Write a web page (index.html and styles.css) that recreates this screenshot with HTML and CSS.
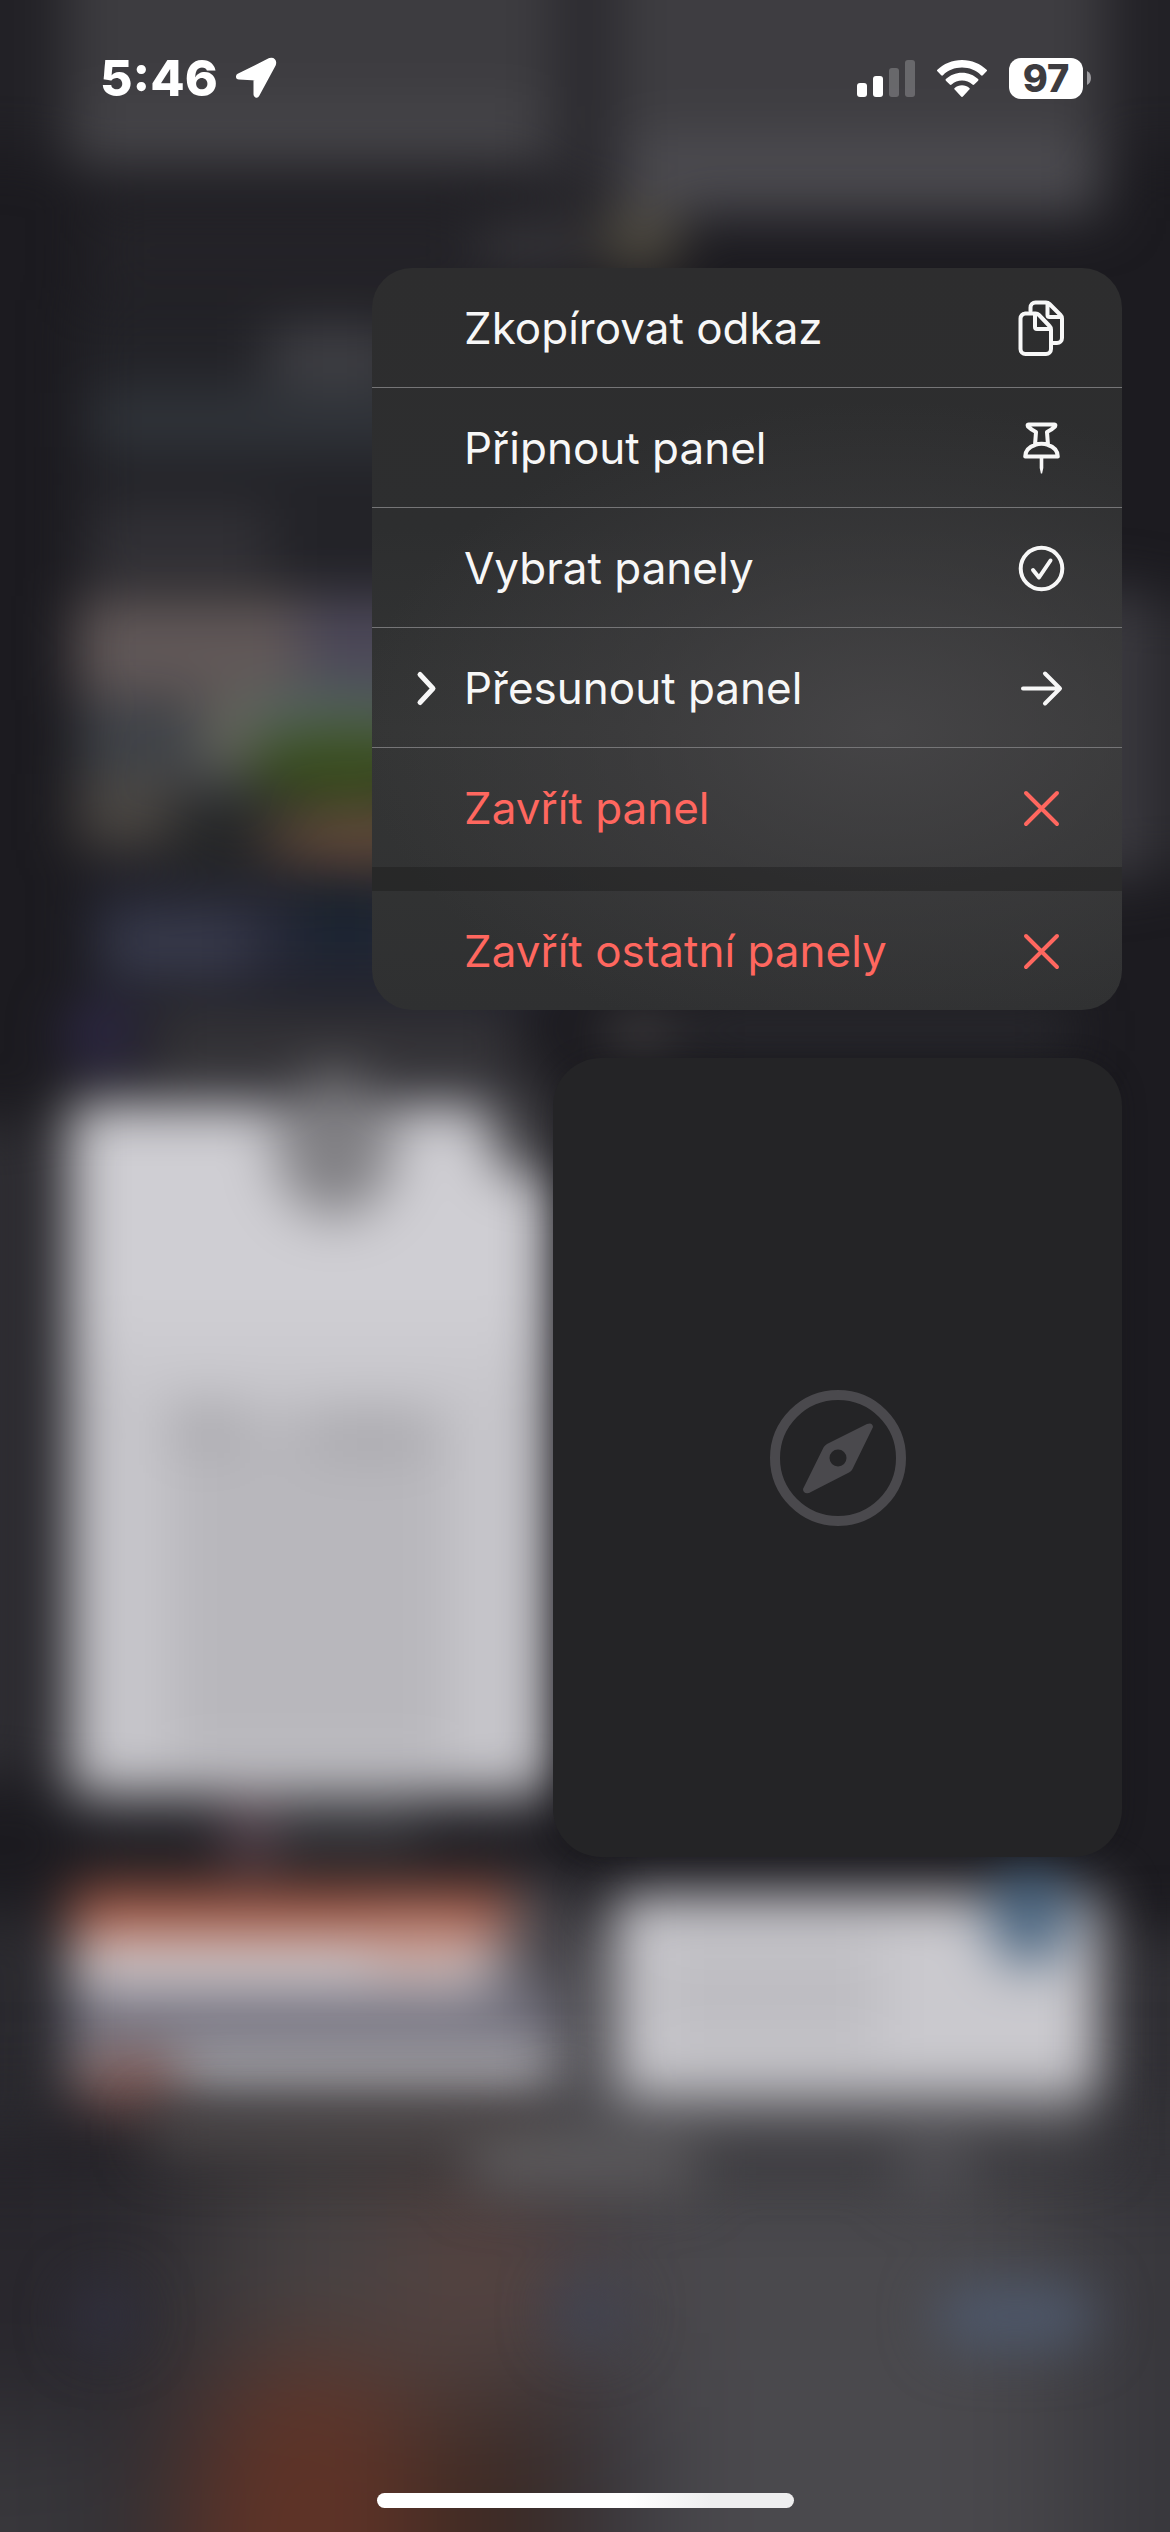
FILE: index.html
```html
<!DOCTYPE html>
<html lang="cs">
<head>
<meta charset="utf-8">
<meta name="viewport" content="width=device-width, initial-scale=1">
<title>Panely</title>
<link rel="stylesheet" href="styles.css">
</head>
<body>
<div class="screen">
  <!-- Blurred overview of the open tabs -->
  <svg class="backdrop" viewBox="0 0 1170 2532" preserveAspectRatio="none" aria-hidden="true">
    <defs>
      <filter id="soft" color-interpolation-filters="sRGB" filterUnits="userSpaceOnUse" x="-100" y="-100" width="1370" height="2732"><feGaussianBlur stdDeviation="27"/></filter>
      <filter id="wide" color-interpolation-filters="sRGB" filterUnits="userSpaceOnUse" x="-200" y="-200" width="1570" height="2932"><feGaussianBlur stdDeviation="56"/></filter>
      <linearGradient id="page" x1="0" y1="0" x2="0" y2="1"><stop offset="0" stop-color="#cfced3"/><stop offset=".3" stop-color="#cfced3"/><stop offset=".42" stop-color="#c7c6cb"/><stop offset="1" stop-color="#c7c6cb"/></linearGradient>
      <linearGradient id="bar" gradientUnits="userSpaceOnUse" x1="0" y1="0" x2="1170" y2="0"><stop offset="0" stop-color="#29272d"/><stop offset=".1" stop-color="#2a282e"/><stop offset=".24" stop-color="#464243"/><stop offset=".38" stop-color="#4c4342"/><stop offset=".5" stop-color="#454146"/><stop offset=".6" stop-color="#4a494d"/><stop offset=".85" stop-color="#4a494d"/><stop offset=".97" stop-color="#39383d"/><stop offset="1" stop-color="#37363b"/></linearGradient>
    </defs>
    <rect width="1170" height="2532" fill="#1c1b20"/>
    <g filter="url(#soft)">
      <!-- top row -->
      <rect x="-100" y="-100" width="1370" height="250" fill="#222126"/>
      <rect x="540" y="-100" width="90" height="300" fill="#2b2a2f"/>
      <rect x="66" y="-100" width="488" height="268" fill="#3d3c40"/>
      <rect x="80" y="105" width="460" height="54" fill="#47464a"/>
      <rect x="618" y="-100" width="488" height="316" fill="#3e3d41"/>
      <rect x="630" y="135" width="460" height="76" fill="#4c4b50"/>
      <rect x="90" y="200" width="390" height="90" fill="#242328"/>
      <rect x="480" y="222" width="110" height="46" fill="#3a393d"/>
      <ellipse cx="640" cy="240" rx="42" ry="30" fill="#544f42"/>
      <!-- left page -->
      <rect x="80" y="300" width="480" height="290" fill="#232328"/>
      <rect x="270" y="328" width="130" height="56" fill="#424247"/>
      <rect x="90" y="392" width="460" height="56" fill="#31353b"/>
      <rect x="90" y="510" width="180" height="66" fill="#333237"/>
      <rect x="76" y="596" width="250" height="104" fill="#615858"/>
      <rect x="300" y="596" width="250" height="110" fill="#4c4858"/>
      <rect x="80" y="704" width="190" height="90" fill="#3f4349"/>
      <rect x="76" y="774" width="120" height="76" fill="#4b4743"/>
      <rect x="200" y="700" width="60" height="70" fill="#65655c"/>
      <rect x="170" y="794" width="130" height="80" fill="#262728"/>
      <ellipse cx="340" cy="716" rx="100" ry="28" fill="#54665f"/>
      <ellipse cx="350" cy="766" rx="106" ry="38" fill="#3a4e1e"/>
      <ellipse cx="370" cy="838" rx="110" ry="26" fill="#6d513f"/>
      <rect x="90" y="885" width="460" height="105" fill="#272938"/>
      <rect x="110" y="916" width="140" height="60" fill="#393b4c"/>
      <rect x="300" y="880" width="90" height="80" fill="#1b2430"/>
      <ellipse cx="100" cy="1036" rx="36" ry="32" fill="#302a4a"/>
      <rect x="150" y="1012" width="370" height="66" fill="#37363a"/>
      <ellipse cx="640" cy="1034" rx="40" ry="22" fill="#434142"/>
      <rect x="690" y="1008" width="380" height="46" fill="#2a2a2f"/>
      <!-- side strips -->
      <rect x="1090" y="590" width="46" height="290" fill="#444349"/>
      <rect x="1136" y="600" width="134" height="270" fill="#2a292e"/>
      <rect x="-100" y="1120" width="136" height="660" fill="#2f2e33"/>
      <rect x="-100" y="1910" width="150" height="250" fill="#2b2a2f"/>
      <rect x="1110" y="1930" width="160" height="250" fill="#302f34"/>
      <rect x="540" y="1930" width="80" height="230" fill="#4c4b50"/>
      <!-- light page -->
      <rect x="68" y="1102" width="484" height="694" rx="10" fill="url(#page)"/>
      <rect x="170" y="1410" width="280" height="350" fill="#b8b7bc"/>
      <rect x="170" y="1404" width="70" height="44" fill="#a9a8ad"/>
      <rect x="310" y="1410" width="120" height="44" fill="#a9a8ad"/>
      <ellipse cx="335" cy="1146" rx="60" ry="70" fill="#818084"/>
      <ellipse cx="534" cy="1128" rx="44" ry="48" fill="#38373b"/>
      <rect x="80" y="1822" width="450" height="34" fill="#262429"/>
      <rect x="270" y="1808" width="150" height="40" fill="#3c3c40"/>
      <ellipse cx="250" cy="1836" rx="28" ry="34" fill="#59454f"/>
      <!-- bottom row -->
      <rect x="70" y="1890" width="480" height="222" fill="#78767e"/>
      <rect x="70" y="1888" width="440" height="50" fill="#a85a45"/>
      <rect x="70" y="1938" width="420" height="54" fill="#d2cccf"/>
      <rect x="370" y="1924" width="100" height="40" fill="#c4998f"/>
      <rect x="520" y="1880" width="60" height="100" fill="#454348"/>
      <rect x="66" y="1996" width="490" height="42" fill="#6b6978"/>
      <rect x="70" y="2042" width="486" height="60" fill="#a9a8ad"/>
      <ellipse cx="130" cy="2088" rx="54" ry="36" fill="#835b57"/>
    </g>
    <g filter="url(#wide)">
      <rect x="-200" y="2136" width="1570" height="650" fill="url(#bar)"/>
      <rect x="420" y="2190" width="130" height="160" fill="#56423f"/>
      <ellipse cx="310" cy="2540" rx="130" ry="190" fill="#5e3327"/>
      <rect x="420" y="2400" width="140" height="320" fill="#3d2a24"/>
      <rect x="560" y="2370" width="80" height="350" fill="#35343a"/>
      <rect x="-200" y="2420" width="310" height="320" fill="#38373b"/>
    </g>
    <g filter="url(#soft)">
      <rect x="612" y="1894" width="490" height="204" rx="8" fill="#cac9ce"/>
      <rect x="660" y="1940" width="220" height="110" fill="#bebdc2"/>
      <ellipse cx="1030" cy="1914" rx="42" ry="52" fill="#496580"/>
      <rect x="540" y="2100" width="560" height="56" fill="#4c4b4f"/>
      <rect x="150" y="2112" width="400" height="40" fill="#504b4b"/>
      <rect x="470" y="2144" width="226" height="46" fill="#605e60"/>
      <rect x="900" y="2144" width="70" height="46" fill="#545358"/>
      <ellipse cx="104" cy="2316" rx="32" ry="34" fill="#31303f"/>
      <ellipse cx="590" cy="2312" rx="36" ry="36" fill="#414452"/>
      <rect x="936" y="2284" width="158" height="64" rx="30" fill="#4e586b"/>
    </g>
  </svg>

  <header class="status">
    <div class="status-left">
      <time class="clock">5:46</time>
      <svg class="location" viewBox="0 0 44 42" aria-hidden="true"><path d="M5 19.500 36 4 Q40 3 39 7 L22.500 37.500 V20.500 Z" fill="#fff" stroke="#fff" stroke-width="6" stroke-linejoin="round"/></svg>
    </div>
    <div class="status-right">
      <svg class="signal" viewBox="0 0 58 37" aria-hidden="true"><g fill="#fff"><rect y="23" width="10" height="14" rx="3"/><rect x="16" y="16" width="10" height="21" rx="3"/><g opacity=".22"><rect x="32" y="8" width="10" height="29" rx="3"/><rect x="48" width="10" height="37" rx="3"/></g></g></svg>
      <svg class="wifi" viewBox="0 0 50 37" aria-hidden="true"><g fill="#fff"><path d="M25 0C34.800 0 43.500 3.800 49.600 9.800a1 1 0 0 1 0 1.500L45.800 15.200a1.300 1.300 0 0 1-1.800 0C39 10.300 32.300 7.600 25 7.600S11 10.300 6 15.200a1.300 1.300 0 0 1-1.800 0L.4 11.300a1 1 0 0 1 0-1.500C6.500 3.800 15.200 0 25 0Z"/><path d="M25 12.800c6.200 0 11.900 2.400 16.100 6.300a1.100 1.100 0 0 1 0 1.600l-3.900 3.900a1.300 1.300 0 0 1-1.800 0A15.400 15.400 0 0 0 25 20.600c-4 0-7.600 1.500-10.400 4a1.300 1.300 0 0 1-1.800 0l-3.900-3.900a1.100 1.100 0 0 1 0-1.600C13.100 15.200 18.800 12.800 25 12.800Z"/><path d="M25 25.300c2.800 0 5.300 1 7.300 2.600a1.100 1.100 0 0 1 0 1.700l-6.400 6.900a1.200 1.200 0 0 1-1.800 0l-6.400-6.900a1.100 1.100 0 0 1 0-1.700c2-1.600 4.500-2.600 7.300-2.600Z"/></g></svg>
      <div class="battery"><span class="level">97</span><svg class="nub" viewBox="0 0 4 14" aria-hidden="true"><path d="M0 0Q4 2 4 7T0 14Z" fill="#9d9ca0"/></svg></div>
    </div>
  </header>

  <main class="content">
    <div class="menu" role="menu">
      <button class="item" role="menuitem"><span class="lead"></span><span class="label">Zkopírovat odkaz</span>
        <svg class="icon" viewBox="0 0 56 56"><path d="M16.500 11V7.500a5 5 0 0 1 5-5H32a5 5 0 0 1 3.500 1.500L46.500 15a5 5 0 0 1 1.500 3.500V38a5 5 0 0 1-5 5H38M33.500 3.500V15a2 2 0 0 0 2 2H47"/><path d="M11 13.500h10.500a5 5 0 0 1 3.500 1.500L35.500 26a5 5 0 0 1 1.500 3.500V49a5 5 0 0 1-5 5H11.500a5 5 0 0 1-5-5V18.500a5 5 0 0 1 5-5ZM21 14.500V27a2 2 0 0 0 2 2h13"/></svg></button>
      <button class="item" role="menuitem"><span class="lead"></span><span class="label">Připnout panel</span>
        <svg class="icon" viewBox="0 0 56 56"><path d="M14.500 4.500H40.500Q42 4.500 41 6.500 38 9.500 33 12L34 25Q43.500 28 43.800 36.500H11.200Q11.500 28 21 25L22 12Q17 9.500 14 6.500 13 4.500 14.500 4.500ZM21 25Q27.500 22.500 34 25"/><path class="solid" d="M25.700 37h3.600v11l-1.200 5.500h-1.200L25.700 48Z"/></svg></button>
      <button class="item" role="menuitem"><span class="lead"></span><span class="label">Vybrat panely</span>
        <svg class="icon" viewBox="0 0 56 56"><circle cx="27.500" cy="28.500" r="20.800"/><path d="M19 30 25 37.500 36.500 20.500"/></svg></button>
      <button class="item" role="menuitem" aria-haspopup="menu"><span class="lead"><svg class="chevron" viewBox="0 0 32 56"><path d="M8 14.500 21 28.500 8 42.500"/></svg></span><span class="label">Přesunout panel</span>
        <svg class="icon" viewBox="0 0 56 56"><path d="M9 28.500H45.500M31 13.500 46 28.500 31 43.500"/></svg></button>
      <button class="item danger last" role="menuitem"><span class="lead"></span><span class="label">Zavřít panel</span>
        <svg class="icon" viewBox="0 0 56 56"><path d="M12 13 43 44M43 13 12 44"/></svg></button>
      <div class="divider" role="separator"></div>
      <button class="item danger last" role="menuitem"><span class="lead"></span><span class="label">Zavřít ostatní panely</span>
        <svg class="icon" viewBox="0 0 56 56"><path d="M12 13 43 44M43 13 12 44"/></svg></button>
    </div>

    <section class="preview" aria-label="Prázdný panel">
      <svg class="compass" viewBox="0 0 136 136" aria-hidden="true"><circle cx="68" cy="68" r="63" fill="none" stroke="#4a494d" stroke-width="10"/><path fill="#4a494d" fill-rule="evenodd" d="M97 34Q102.500 32 103 37L82.500 79Q81.500 81 79 82.500L39 103Q33 104 33 99L53.500 57.500Q54.500 55.500 57 54ZM68 59.500a8.500 8.500 0 1 0 0 17 8.500 8.500 0 0 0 0-17Z"/></svg>
    </section>
  </main>

  <div class="home"></div>
</div>
</body>
</html>
```
FILE: styles.css
```css
* { box-sizing: border-box; }
body {
  margin: 0;
  background: #1c1b20;
  font-family: Inter, "Liberation Sans", sans-serif;
  color: #fff;
}
.screen {
  position: relative;
  min-height: 100vh;
  display: flex;
  flex-direction: column;
  overflow: hidden;
}
.backdrop {
  position: absolute;
  inset: 0;
  width: 100%;
  height: 100%;
  z-index: -1;
}
svg { display: block; }

.status {
  height: 156px;
  padding: 0 79px 0 100px;
  display: flex;
  align-items: center;
  justify-content: space-between;
}
.status-left, .status-right { display: flex; align-items: center; }
.status-left { gap: 16px; }
.status-right { gap: 22px; }
.clock { font-size: 50px; line-height: 60px; font-weight: 800; }
.location { width: 44px; height: 42px; }
.signal { width: 58px; height: 37px; }
.wifi { width: 50px; height: 37px; }
.battery { display: flex; align-items: center; gap: 4px; }
.level {
  width: 74px;
  height: 41px;
  border-radius: 12px;
  background: #fff;
  color: #3d3c40;
  font-size: 38px;
  line-height: 41px;
  font-weight: 800;
  text-align: center;
}
.nub { width: 4px; height: 14px; }

.content {
  flex: 1;
  padding: 112px 48px 0;
  display: flex;
  flex-direction: column;
  align-items: flex-end;
  gap: 48px;
}
.menu {
  width: 750px;
  max-width: 100%;
  border-radius: 40px;
  overflow: hidden;
  background:
    radial-gradient(ellipse 70% 44% at 68% 62%, rgba(71, 70, 72, .9), rgba(66, 65, 67, .5) 50%, rgba(52, 52, 54, 0)),
    linear-gradient(#2d2d2e, #2d2e2f 35%, #343535 62%, #2f3031);
}
.item {
  width: 100%;
  height: 120px;
  padding: 0 52px 0 38px;
  display: flex;
  align-items: center;
  border: 0;
  border-bottom: 1px solid #757577;
  background: none;
  font: inherit;
  color: #f7f7f7;
  text-align: left;
}
.item.last { height: 119px; border-bottom: 0; }
.item.danger { color: #ff675f; }
.lead { width: 54px; flex: none; }
.label { flex: 1; font-size: 44px; line-height: 56px; }
.icon, .chevron {
  height: 56px;
  fill: none;
  stroke: currentColor;
  stroke-width: 4;
  stroke-linecap: round;
  stroke-linejoin: round;
}
.icon { width: 56px; flex: none; }
.chevron { width: 32px; stroke-width: 5; margin-left: 2px; }
.icon .solid { fill: currentColor; stroke: none; }
.divider { height: 24px; background: rgba(25, 25, 25, .4); }

.preview {
  width: 569px;
  max-width: 100%;
  aspect-ratio: 569 / 799;
  border-radius: 48px;
  background: #242426;
  box-shadow: 0 0 24px rgba(20, 20, 22, .3);
  display: grid;
  place-items: center;
}
.compass { width: 136px; height: 136px; }
.home {
  width: 417px;
  height: 15px;
  margin: 48px auto 24px;
  border-radius: 8px;
  background: linear-gradient(90deg, #fff 60%, #eeeeef 80%);
}
```
